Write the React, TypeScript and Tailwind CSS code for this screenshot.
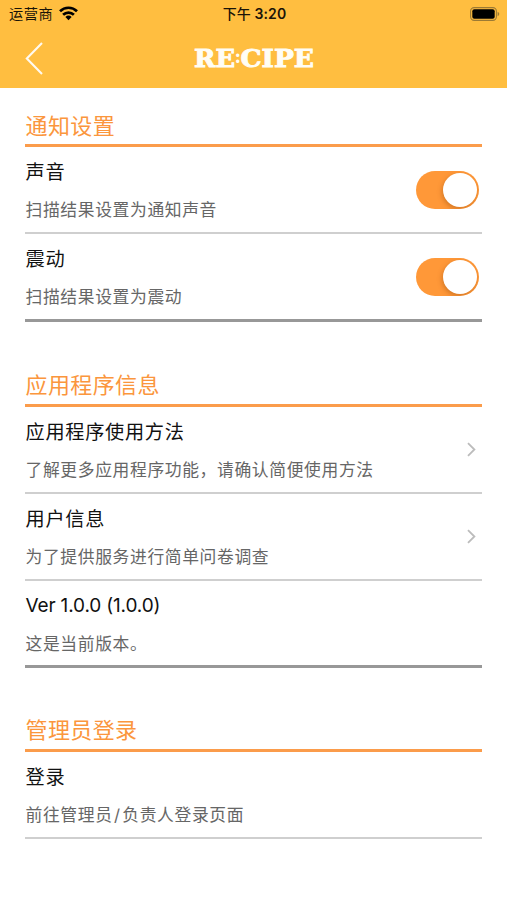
import React from "react";

type Row = {
  title: string;
  detail: string;
  kind?: "switch" | "link";
  height: string;
  line: string;
};

type Section = { heading: string; headingBox: string; rows: Row[] };

const light = "border-b-2 border-[#cfcfcf]";
const dark = "border-b-[3px] border-[#989898]";

const sections: Section[] = [
  {
    heading: "通知设置",
    headingBox: "h-[59px] pb-[2px]",
    rows: [
      { title: "声音", detail: "扫描结果设置为通知声音", kind: "switch", height: "h-[87px]", line: light },
      { title: "震动", detail: "扫描结果设置为震动", kind: "switch", height: "h-[88px]", line: dark },
    ],
  },
  {
    heading: "应用程序信息",
    headingBox: "h-[85px] pb-[3px]",
    rows: [
      { title: "应用程序使用方法", detail: "了解更多应用程序功能，请确认简便使用方法", kind: "link", height: "h-[87px]", line: light },
      { title: "用户信息", detail: "为了提供服务进行简单问卷调查", kind: "link", height: "h-[87px]", line: light },
      { title: "Ver 1.0.0 (1.0.0)", detail: "这是当前版本。", height: "h-[87px]", line: dark },
    ],
  },
  {
    heading: "管理员登录",
    headingBox: "h-[84px] pb-[3px]",
    rows: [
      { title: "登录", detail: "前往管理员/负责人登录页面", height: "h-[87px]", line: light },
    ],
  },
];

function Switch() {
  return (
    <button
      aria-label="switch"
      className="mr-[3px] flex h-[38px] w-[63px] shrink-0 items-center justify-end overflow-hidden rounded-full bg-[#ff9838] pr-[2px]"
    >
      <span className="size-[34px] rounded-full bg-white shadow-[-1px_2px_5px_rgba(130,60,0,0.35)]" />
    </button>
  );
}

function Chevron() {
  return (
    <svg className="mr-[6px] shrink-0" width="9" height="15" viewBox="0 0 9 15" fill="none" stroke="#bcbcbc" strokeWidth="1.8">
      <path d="M1 1.2 7.4 7.5 1 13.8" />
    </svg>
  );
}

function StatusBar() {
  return (
    <div className="grid h-7 grid-cols-3 items-center pl-[9px] pr-[7px] text-[#1a1408]">
      <div className="flex items-center gap-[6px]">
        <span className="text-[14.2px] leading-5 tracking-[0.6px]">运营商</span>
        <svg className="-mt-[2px]" width="19" height="15" viewBox="0 0 19 15" fill="none" stroke="#000" strokeWidth="2.7">
          <path d="M1 5.2a12.2 12.2 0 0 1 17 0" />
          <path d="M4.1 8.7a7.8 7.8 0 0 1 10.8 0" />
          <path d="M9.5 14.2 6.4 11a4.5 4.5 0 0 1 6.2 0z" fill="#000" stroke="none" />
        </svg>
      </div>
      <div className="text-center text-[14px] font-medium leading-5 whitespace-nowrap">
        下午 <span className="font-semibold tracking-[0.15px]">3:20</span>
      </div>
      <svg className="-mt-px justify-self-end" width="30" height="14" viewBox="0 0 30 14">
        <rect x=".6" y=".6" width="25.8" height="12.8" rx="3.6" fill="none" stroke="#9c7a34" strokeWidth="1.1" />
        <rect x="2.3" y="2.3" width="22.4" height="9.4" rx="2" fill="#000" />
        <path d="M27.6 4.8c2.2.8 2.2 3.6 0 4.4z" fill="#9c7a34" />
      </svg>
    </div>
  );
}

function Logo() {
  return (
    <svg
      width="126"
      height="40"
      viewBox="-2 -8 126 40"
      fill="#fffdf5"
      stroke="#fffdf5"
      strokeWidth="0.9"
      fontFamily="'DejaVu Serif', serif"
      fontWeight="700"
      fontSize="25"
    >
      <text x="1" y="21" textLength="41" lengthAdjust="spacingAndGlyphs">RE</text>
      <text x="41.5" y="17" fontSize="19" strokeWidth="0" textLength="6.5" lengthAdjust="spacingAndGlyphs">:</text>
      <text x="47.5" y="21" textLength="73.5" lengthAdjust="spacingAndGlyphs">CIPE</text>
    </svg>
  );
}

export default function App() {
  return (
    <div className="min-h-[900px] w-full bg-white font-['Inter','Noto_Sans_CJK_SC',sans-serif]">
      <header className="h-[88px] bg-[#ffbe40]">
        <StatusBar />
        <div className="grid h-[60px] grid-cols-[1fr_auto_1fr] items-center">
          <svg className="ml-[25px]" width="19" height="33" viewBox="0 0 19 33" fill="none" stroke="#fffaf0" strokeWidth="2.1">
            <path d="M17 1 1.8 16.5 17 32" />
          </svg>
          <Logo />
          <span />
        </div>
      </header>
      <main className="px-[25px]">
        {sections.map((section) => (
          <section key={section.heading}>
            <h2
              className={`flex items-end border-b-[3px] border-[#fb9c4b] pl-[0.5px] text-[22px] leading-[32px] tracking-[0.4px] text-[#fb963d] ${section.headingBox}`}
            >
              {section.heading}
            </h2>
            {section.rows.map((row) => (
              <div key={row.title} className={`flex items-center justify-between ${row.height} ${row.line}`}>
                <div className="flex flex-col gap-[12px] pl-[0.5px] pt-px">
                  <h3 className="text-[19.2px] font-normal leading-7 text-[#111]">
                    {row.title.startsWith("Ver") ? (
                      <span className="text-[19px] tracking-[-0.15px]">{row.title}</span>
                    ) : (
                      <span className="tracking-[0.7px]">{row.title}</span>
                    )}
                  </h3>
                  <p className="text-[16.8px] font-normal leading-6 tracking-[0.63px] text-[#666]">
                    {row.detail.split("/").map((part, i) => (
                      <React.Fragment key={part}>
                        {i > 0 && <span className="mx-[1.5px]">/</span>}
                        {part}
                      </React.Fragment>
                    ))}
                  </p>
                </div>
                {row.kind === "switch" && <Switch />}
                {row.kind === "link" && <Chevron />}
              </div>
            ))}
          </section>
        ))}
      </main>
    </div>
  );
}
